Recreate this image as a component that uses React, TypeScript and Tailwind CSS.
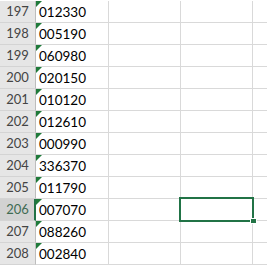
import React from "react";

const rows: [number, string][] = [
  [197, "012330"],
  [198, "005190"],
  [199, "060980"],
  [200, "020150"],
  [201, "010120"],
  [202, "012610"],
  [203, "000990"],
  [204, "336370"],
  [205, "011790"],
  [206, "007070"],
  [207, "088260"],
  [208, "002840"],
];

export default function App() {
  return (
    <div
      className="relative w-[267px] h-[268px] overflow-hidden bg-white pt-px"
      style={{ fontFamily: "Lato, 'Liberation Sans', sans-serif" }}
    >
      {rows.map(([n, v]) => {
        const sel = n === 206;
        return (
          <div key={n} className="flex h-[22px] box-border">
            <div
              className={
                "w-[36px] shrink-0 box-border border-b border-b-[#d4d4d4] flex items-center justify-center text-[13px] leading-[21px] " +
                (sel
                  ? "bg-[#d2d2d2] text-[#3f6b52] border-r-2 border-r-[#217346]"
                  : "bg-[#e6e6e6] text-[#444444] border-r border-r-[#bdbdbd]")
              }
            >
              <span className={sel ? "pl-[1px]" : ""}>{n}</span>
            </div>
            <div className="relative w-[73px] shrink-0 box-border border-b border-r border-[#d9d9d9] pl-[3px] pt-px text-[13.5px] leading-[20px] text-black">
              <svg className="absolute left-0 top-0" width="6" height="6" viewBox="0 0 6 6">
                <polygon points="0,0 6,0 0,6" fill="#1f7a3a" />
              </svg>
              {v}
            </div>
            <div className="w-[72px] shrink-0 box-border border-b border-r border-[#d9d9d9]" />
            <div className="w-[72px] shrink-0 box-border border-b border-r border-[#d9d9d9]" />
            <div className="flex-1 box-border border-b border-[#d9d9d9]" />
          </div>
        );
      })}
      <div className="absolute left-[179px] top-[197px] w-[75px] h-[25px] border-2 border-[#217346] pointer-events-none" />
      <div className="absolute left-[250px] top-[218px] w-[7px] h-[6px] bg-[#217346] border border-white" />
    </div>
  );
}
